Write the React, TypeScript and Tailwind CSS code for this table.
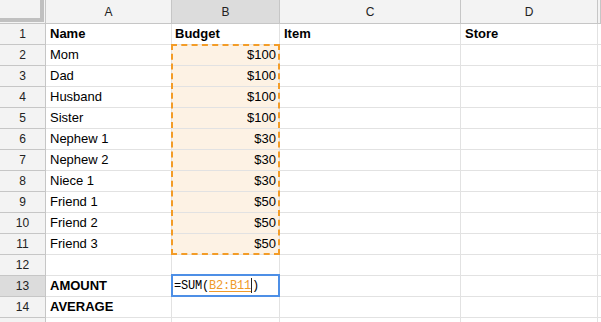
import React from 'react';

const cols = ['A', 'B', 'C', 'D', ''];

const rows: { a: string; b: string; c?: string; d?: string; bold?: boolean }[] = [
  { a: 'Name', b: 'Budget', c: 'Item', d: 'Store', bold: true },
  { a: 'Mom', b: '$100' },
  { a: 'Dad', b: '$100' },
  { a: 'Husband', b: '$100' },
  { a: 'Sister', b: '$100' },
  { a: 'Nephew 1', b: '$30' },
  { a: 'Nephew 2', b: '$30' },
  { a: 'Niece 1', b: '$30' },
  { a: 'Friend 1', b: '$50' },
  { a: 'Friend 2', b: '$50' },
  { a: 'Friend 3', b: '$50' },
  { a: '', b: '' },
  { a: 'AMOUNT', b: '', bold: true },
  { a: 'AVERAGE', b: '', bold: true },
  { a: '', b: '' },
];

const grid = 'grid grid-cols-[46px_126px_108px_181px_137px_1fr]';

export default function App() {
  return (
    <div className="relative w-[601px] h-[322px] overflow-hidden bg-white text-[13px] text-black font-['Liberation_Sans',Arial,sans-serif]">
      {/* column headers */}
      <div className={`${grid} h-[24px]`}>
        <div className="bg-[#f3f3f3] border-r border-b border-[#c6c6c6] relative">
          <div className="absolute right-[1px] top-0 bottom-[1px] w-[4px] bg-[#c0c0c0]" />
          <div className="absolute left-0 right-[1px] bottom-[1px] h-[4px] bg-[#c0c0c0]" />
        </div>
        {cols.map((c, i) => (
          <div
            key={i}
            className={`flex items-center justify-center border-r border-b border-[#c6c6c6] text-[12px] text-[#222] ${
              c === 'B' ? 'bg-[#dcdcdc]' : 'bg-[#f3f3f3]'
            }`}
          >
            {c}
          </div>
        ))}
      </div>

      {rows.map((r, i) => (
        <div key={i} className={`${grid} h-[21px]`}>
          {/* last row is cut by the window, its number is not visible */}
          <div
            className={`flex items-center justify-center border-r border-b border-[#c6c6c6] text-[12px] text-[#222] ${
              i === 12 ? 'bg-[#dcdcdc]' : 'bg-[#f3f3f3]'
            }`}
          >
            {i < 14 ? i + 1 : ''}
          </div>
          <div className={`flex items-center px-[4px] border-r border-b border-[#e2e2e2] ${r.bold ? 'font-bold' : ''}`}>
            {r.a}
          </div>
          <div
            className={`flex items-center px-[3px] border-r border-b border-[#e2e2e2] ${
              r.bold ? 'font-bold justify-start' : 'justify-end'
            } ${i >= 1 && i <= 10 ? 'bg-[#fdf2e4]' : ''}`}
          >
            {r.b}
          </div>
          <div className={`flex items-center px-[4px] border-r border-b border-[#e2e2e2] ${r.bold ? 'font-bold' : ''}`}>
            {r.c}
          </div>
          <div className={`flex items-center px-[4px] border-r border-b border-[#e2e2e2] ${r.bold ? 'font-bold' : ''}`}>
            {r.d}
          </div>
          <div className="border-b border-[#e2e2e2]" />
        </div>
      ))}

      {/* copied range B2:B11 */}
      <div className="absolute left-[171px] top-[44px] w-[109px] h-[211px] border-2 border-dashed border-[#f39c27] pointer-events-none" />

      {/* formula editor in B13 */}
      <div className="absolute left-[171px] top-[274px] w-[109px] h-[23px] border-2 border-[#4d8fe6] bg-white flex items-center pl-[1px] text-[12px] font-['Liberation_Mono',monospace] tracking-[-0.2px]">
        <span>=SUM(</span>
        <span className="text-[#ef9a2a] underline decoration-[#ef9a2a] underline-offset-[2px]">B2:B11</span>
        <span className="w-[1px] h-[15px] bg-[#222]" />
        <span>)</span>
      </div>
    </div>
  );
}
